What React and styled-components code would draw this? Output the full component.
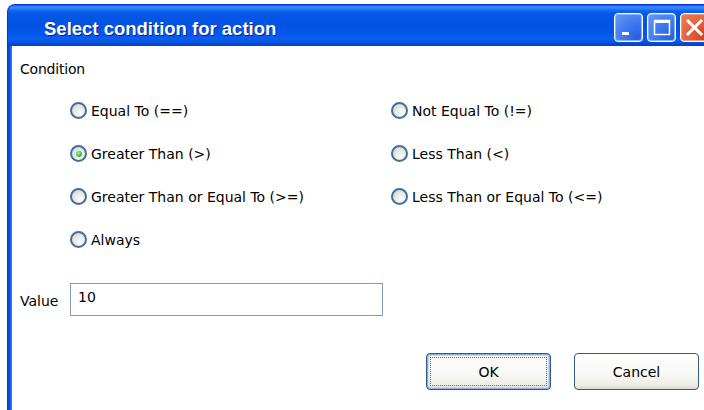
import React, { useState } from "react";
import styled, { createGlobalStyle } from "styled-components";

const Global = createGlobalStyle`
  html, body {
    margin: 0;
    padding: 0;
    background: #ffffff;
    overflow: hidden;
  }
  body {
    font-family: "DejaVu Sans", "Liberation Sans", sans-serif;
  }
`;

const Page = styled.div`
  width: 704px;
  height: 410px;
  overflow: hidden;
  padding: 4px 0 0 7px;
  box-sizing: border-box;
`;

const Window = styled.div`
  width: 709px;
  height: 420px;
  display: flex;
  flex-direction: column;
`;

const TitleBar = styled.div`
  height: 42px;
  flex: none;
  box-sizing: border-box;
  display: flex;
  align-items: center;
  padding: 3px 6px 0 36px;
  border-radius: 8px 8px 0 0;
  border: 1px solid #0831d9;
  border-bottom: none;
  background: linear-gradient(
    to bottom,
    #0a55e8 0%,
    #3b8cfb 5%,
    #2a7ff8 9%,
    #0e66f0 14%,
    #0557e6 22%,
    #0452e2 50%,
    #0556e8 70%,
    #0a5ff0 82%,
    #0656e6 90%,
    #0347cc 95%,
    #0a3fc0 100%
  );
`;

const Title = styled.span`
  flex: 1;
  padding-top: 4px;
  font-family: "Liberation Sans", "DejaVu Sans", sans-serif;
  font-weight: bold;
  font-size: 18.5px;
  color: #ffffff;
  text-shadow: 1px 1px 0 #0a1e8a;
`;

const Caption = styled.div`
  display: flex;
  gap: 4px;
`;

const CaptionButton = styled.div`
  width: 29px;
  height: 29px;
  box-sizing: border-box;
  border: 1px solid #ffffff;
  border-radius: 4px;
  display: flex;
  align-items: center;
  justify-content: center;
  background: ${(p) =>
    p.$close
      ? "radial-gradient(circle at 85% 85%, #cc4520 0%, #e0603a 45%, #eb7f5e 100%)"
      : "radial-gradient(circle at 85% 85%, #2a5ee6 0%, #3d78f0 45%, #6c9cf6 100%)"};
  box-shadow: inset 0 0 0 1px ${(p) => (p.$close ? "#f29c7f" : "#8fb2f8")};
`;

const Frame = styled.div`
  flex: 1;
  display: flex;
  background: linear-gradient(
    to right,
    #0831d9 0px,
    #0a45e0 1px,
    #0d4fe6 3px,
    #2c72f2 4px,
    #3d80f4 5px
  );
  padding: 0 5px;
`;

const Client = styled.div`
  flex: 1;
  background: #ffffff;
  padding: 15px 12px 0 8px;
  font-size: 14px;
  color: #000000;
`;

const SectionLabel = styled.div`
  line-height: 16px;
  letter-spacing: -0.2px;
`;

const OptionGrid = styled.div`
  margin: 12px 0 0 50px;
  display: grid;
  grid-template-columns: 321px auto;
  grid-auto-rows: 43px;
`;

const Option = styled.label`
  display: flex;
  align-items: center;
  gap: 4px;
  cursor: default;
`;

const RadioCircle = styled.span`
  width: 17px;
  height: 17px;
  box-sizing: border-box;
  border-radius: 50%;
  border: 2px solid #42709e;
  background: radial-gradient(circle at 65% 70%, #ffffff 0%, #f0f0ed 30%, #cfcfcb 100%);
  display: flex;
  align-items: center;
  justify-content: center;
  flex: none;

  &::after {
    content: "";
    width: 6px;
    height: 6px;
    border-radius: 50%;
    background: radial-gradient(circle at 40% 35%, #a8f0a0 0%, #3cc23c 55%, #1f9a1f 100%);
    display: ${(p) => (p.$checked ? "block" : "none")};
  }
`;

const OptionText = styled.span`
  line-height: 16px;
  white-space: nowrap;
`;

const ValueRow = styled.div`
  margin-top: 22px;
  display: flex;
  align-items: center;
`;

const ValueLabel = styled.span`
  width: 50px;
  flex: none;
  padding-top: 2px;
`;

const TextBox = styled.div`
  width: 313px;
  height: 33px;
  box-sizing: border-box;
  border: 1px solid #7f9db9;
  padding: 5px 7px;
  line-height: 16px;
`;

const ButtonRow = styled.div`
  margin-top: 37px;
  display: flex;
  justify-content: flex-end;
  gap: 23px;
`;

const Button = styled.div`
  position: relative;
  width: 125px;
  height: 37px;
  box-sizing: border-box;
  border: 1px solid #2f5b8c;
  border-radius: 4px;
  display: flex;
  align-items: center;
  justify-content: center;
  background: linear-gradient(to bottom, #ffffff 0%, #f7f7f4 60%, #eeede6 88%, #dcd8cc 100%);
  box-shadow: ${(p) => (p.$default ? "inset 0 0 0 1px #8fb0dc, inset 0 0 0 2px #c6d7ef" : "none")};
  color: #000000;

  &::after {
    content: "";
    display: ${(p) => (p.$default ? "block" : "none")};
    position: absolute;
    inset: 3px;
    border: 1px dotted #6a6a6a;
  }
`;

const Minimize = () => (
  <svg width="27" height="27" viewBox="0 0 27 27">
    <rect x="7" y="18" width="7" height="3" fill="#ffffff" />
  </svg>
);

const Maximize = () => (
  <svg width="27" height="27" viewBox="0 0 27 27">
    <rect x="6.5" y="6.5" width="15" height="14" fill="none" stroke="#ffffff" strokeWidth="1.5" />
    <rect x="6" y="6" width="16" height="3" fill="#ffffff" />
  </svg>
);

const Close = () => (
  <svg width="27" height="27" viewBox="0 0 27 27">
    <path d="M7 7 L20 20 M20 7 L7 20" stroke="#ffffff" strokeWidth="3" strokeLinecap="square" />
  </svg>
);

const conditions = [
  { id: "eq", label: "Equal To (==)" },
  { id: "ne", label: "Not Equal To (!=)" },
  { id: "gt", label: "Greater Than (>)" },
  { id: "lt", label: "Less Than (<)" },
  { id: "ge", label: "Greater Than or Equal To (>=)" },
  { id: "le", label: "Less Than or Equal To (<=)" },
  { id: "always", label: "Always" },
];

export default function App() {
  const [selected, setSelected] = useState("gt");

  return (
    <>
      <Global />
      <Page>
        <Window>
          <TitleBar>
            <Title>Select condition for action</Title>
            <Caption>
              <CaptionButton>
                <Minimize />
              </CaptionButton>
              <CaptionButton>
                <Maximize />
              </CaptionButton>
              <CaptionButton $close>
                <Close />
              </CaptionButton>
            </Caption>
          </TitleBar>
          <Frame>
            <Client>
              <SectionLabel>Condition</SectionLabel>
              <OptionGrid>
                {conditions.map((c) => (
                  <Option key={c.id} onClick={() => setSelected(c.id)}>
                    <RadioCircle $checked={selected === c.id} />
                    <OptionText>{c.label}</OptionText>
                  </Option>
                ))}
              </OptionGrid>
              <ValueRow>
                <ValueLabel>Value</ValueLabel>
                <TextBox>10</TextBox>
              </ValueRow>
              <ButtonRow>
                <Button $default>OK</Button>
                <Button>Cancel</Button>
              </ButtonRow>
            </Client>
          </Frame>
        </Window>
      </Page>
    </>
  );
}
